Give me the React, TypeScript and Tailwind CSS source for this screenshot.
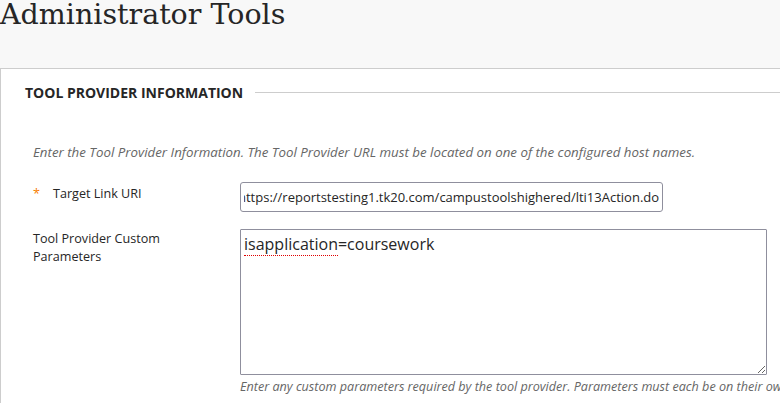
import { useEffect, useRef } from "react";

const sans = { fontFamily: '"Open Sans", "Noto Sans", sans-serif' };

export default function App() {
  const urlRef = useRef<HTMLInputElement>(null);

  useEffect(() => {
    // the field is scrolled to its end, like the browser leaves it after typing
    if (urlRef.current) urlRef.current.scrollLeft = 10000;
  }, []);

  return (
    <div className="h-[403px] w-[780px] overflow-hidden bg-[#f8f8f8]" style={sans}>
      <div className="h-[68px] overflow-hidden">
        <h1
          className="-mt-[5px] text-[28.5px] leading-[40px] text-[#262626]"
          style={{ fontFamily: '"DejaVu Serif", "Liberation Serif", serif' }}
        >
          Administrator Tools
        </h1>
      </div>

      <section className="h-full border-l border-t border-[#cdcdcd] bg-white">
        <div className="flex items-center pl-6 pt-[13px]">
          <h2 className="shrink-0 text-[14px] font-bold text-[#262626]">
            TOOL PROVIDER INFORMATION
          </h2>
          <div className="ml-3 h-px flex-1 bg-[#cdcdcd]" />
        </div>

        <p className="mt-[40px] pl-[32px] text-[13.3px] italic text-[#666666]">
          Enter the Tool Provider Information. The Tool Provider URL must be located on one of the configured host names.
        </p>

        <div className="mt-[19px] flex">
          <div className="flex w-[239px] shrink-0 pl-[32px] pt-[3px] text-[12.6px] text-[#262626]">
            <span className="w-5 text-[#f77d00]">*</span>
            <span>Target Link URI</span>
          </div>
          <input
            ref={urlRef}
            readOnly
            value="https://reportstesting1.tk20.com/campustoolshighered/lti13Action.do"
            className="h-[30px] w-[423px] rounded-[3px] border border-[#8f8f9d] px-[3px] text-[13px] text-[#262626] outline-none"
          />
        </div>

        <div className="mt-[17px] flex">
          <div className="w-[239px] shrink-0 pl-[32px] pt-[1px] text-[12.6px] leading-[18px] text-[#262626]">
            Tool Provider Custom
            <br />
            Parameters
          </div>
          <div>
            <div className="h-[146px] w-[527px] resize overflow-auto rounded-[1px] border border-[#8f8f9d] px-[3px] pt-[3px] text-[16px] leading-[22px] text-[#262626]">
              <span className="border-b border-dotted border-[#e00000]">isapplication</span>
              =coursework
            </div>
            <p className="mt-[3px] whitespace-nowrap text-[12.6px] italic text-[#666666]">
              Enter any custom parameters required by the tool provider. Parameters must each be on their own line and be entered in &quot;name=value&quot; format.
            </p>
          </div>
        </div>
      </section>
    </div>
  );
}
